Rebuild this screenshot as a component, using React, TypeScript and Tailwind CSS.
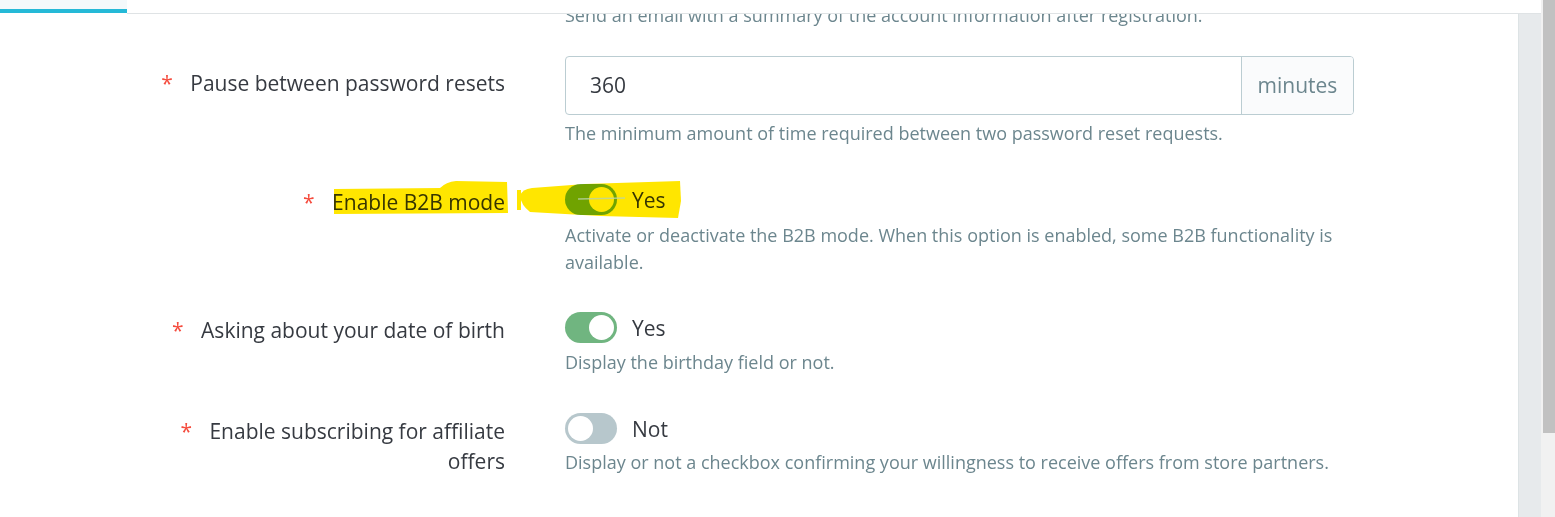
import React from 'react';

const font = { fontFamily: '"Open Sans", "Noto Sans", sans-serif' };

const Toggle = ({ on }: { on: boolean }) => (
  <div
    className={`flex h-[31px] w-[52px] shrink-0 items-center rounded-full p-[3px] ${
      on ? 'justify-end bg-[#70b580]' : 'justify-start bg-[#b7c7cc]'
    }`}
  >
    <div className="h-[25px] w-[25px] rounded-full bg-white" />
  </div>
);

const Label = ({ text, pt }: { text: string; pt: string }) => (
  <div className={`${pt} text-right text-[21px] leading-[30px] text-[#363a41]`}>
    <span className="mr-[12px] text-[#f54c3e]">*</span> {text}
  </div>
);

const Help = ({ children, mt }: { children: React.ReactNode; mt: string }) => (
  <p className={`${mt} text-[18px] leading-[27px] text-[#6c868e]`}>{children}</p>
);

const SwitchRow = ({
  label,
  on,
  help,
  mt,
  helpMt,
}: {
  label: string;
  on: boolean;
  help: string;
  mt: string;
  helpMt: string;
}) => (
  <div className={`${mt} grid grid-cols-[365px_789px] gap-x-[60px]`}>
    <Label text={label} pt="pt-[3px]" />
    <div>
      <div className="flex items-center gap-[15px]">
        <Toggle on={on} />
        <span className="text-[21px] leading-[30px] text-[#363a41]">{on ? 'Yes' : 'Not'}</span>
      </div>
      <Help mt={helpMt}>{help}</Help>
    </div>
  </div>
);

export default function App() {
  return (
    <div className="relative flex h-[517px] w-[1555px] overflow-hidden bg-white" style={font}>
      <div className="flex min-w-0 flex-1 flex-col">
        {/* header tabs */}
        <div className="flex h-[14px] shrink-0">
          <div className="h-[13px] w-[127px] border-b-4 border-[#25b9d7] bg-[#f4f9fb]" />
          <div className="flex-1 border-b border-[#dfe3e5]" />
        </div>

        <div className="flex min-h-0 flex-1">
          <div className="min-w-0 flex-1 overflow-hidden pl-[140px]">
            <div className="-mt-[12px] grid grid-cols-[365px_789px] gap-x-[60px]">
              <div />
              <Help mt="mt-0">
                Send an email with a summary of the account information after registration.
              </Help>
            </div>

            <div className="mt-[27px] grid grid-cols-[365px_789px] gap-x-[60px]">
              <Label text="Pause between password resets" pt="pt-[12px]" />
              <div>
                <div className="flex h-[59px] overflow-hidden rounded-[4px] border border-[#bbcdd2]">
                  <div className="flex flex-1 items-center pl-[24px] text-[21px] text-[#363a41]">360</div>
                  <div className="flex w-[112px] items-center justify-center border-l border-[#bbcdd2] bg-[#fafbfc] text-[21px] text-[#6c868e]">
                    minutes
                  </div>
                </div>
                <Help mt="mt-[5px]">
                  The minimum amount of time required between two password reset requests.
                </Help>
              </div>
            </div>

            <SwitchRow
              mt="mt-[37px]"
              helpMt="mt-[7px]"
              label="Enable B2B mode"
              on
              help="Activate or deactivate the B2B mode. When this option is enabled, some B2B functionality is available."
            />
            <SwitchRow
              mt="mt-[36px]"
              helpMt="mt-[6px]"
              label="Asking about your date of birth"
              on
              help="Display the birthday field or not."
            />
            <SwitchRow
              mt="mt-[37px]"
              helpMt="mt-[5px]"
              label="Enable subscribing for affiliate offers"
              on={false}
              help="Display or not a checkbox confirming your willingness to receive offers from store partners."
            />
          </div>
          <div className="w-[23px] shrink-0 border-l border-[#dde3e5] bg-[#e7eaec]" />
        </div>
      </div>

      {/* scrollbar */}
      <div className="flex w-[14px] shrink-0 flex-col bg-[#f1f1f1]">
        <div className="ml-[2px] h-[433px] bg-[#c1c1c1]" />
      </div>

      {/* highlighter marks */}
      <svg
        className="pointer-events-none absolute left-0 top-0 mix-blend-multiply"
        width="1555"
        height="517"
        viewBox="0 0 1555 517"
      >
        <path
          d="M334 189 L440 188 Q446 182 456 181 L507 182 L508 213 L334 214 Z"
          fill="#ffe600"
        />
        <path d="M517 190 L521 190 L521 210 L517 210 Z" fill="#ffe600" />
        <path
          d="M520 196 Q522 189 532 188 L585 184 L680 181 L681 201 L678 218 L600 216 L530 212 Q521 205 520 196 Z"
          fill="#ffe600"
        />
      </svg>
      <svg
        className="pointer-events-none absolute left-0 top-0"
        width="1555"
        height="517"
        viewBox="0 0 1555 517"
      >
        <path d="M578 199 L625 198" stroke="#b9d3a8" strokeWidth="1.5" fill="none" opacity="0.8" />
      </svg>
    </div>
  );
}
